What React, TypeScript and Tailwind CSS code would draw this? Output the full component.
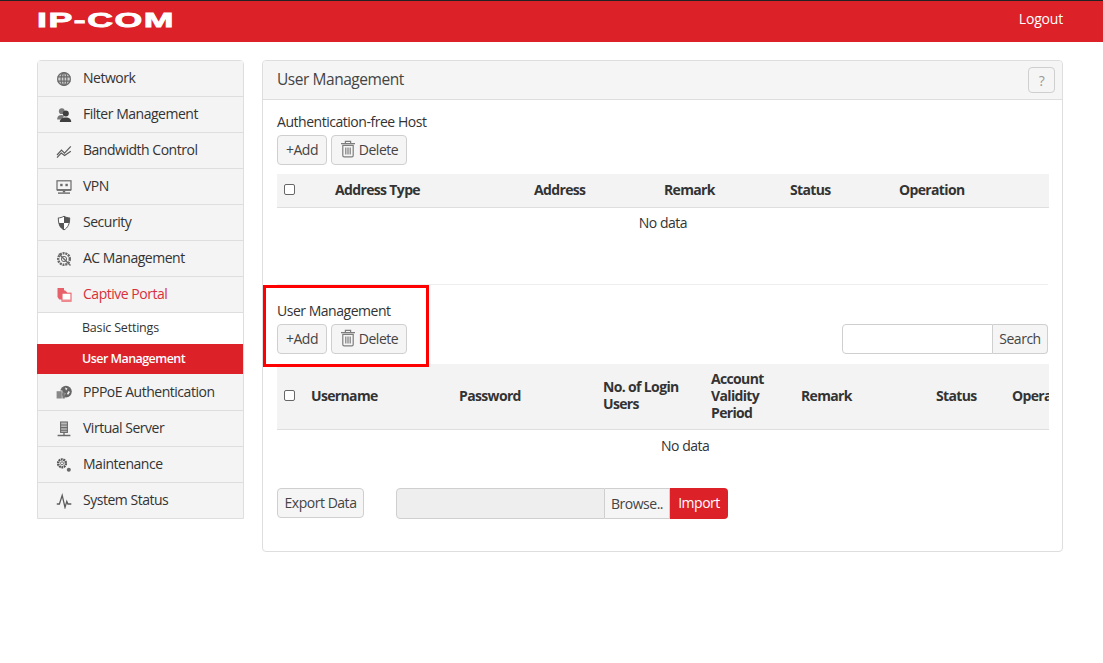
import React from "react";

const G = "#6a6a6a";

const icons: Record<string, React.ReactNode> = {
  globe: (
    <g fill="none" stroke={G} strokeWidth="1.2">
      <circle cx="8" cy="8" r="6.4" fill="#8a8a8a" fillOpacity=".35" />
      <ellipse cx="8" cy="8" rx="2.9" ry="6.4" />
      <path d="M1.6 5.8h12.8M1.6 10.2h12.8M8 1.6v12.8" />
    </g>
  ),
  users: (
    <g>
      <circle cx="5.8" cy="4.2" r="2.9" fill="#777" />
      <path d="M1.2 12c0-2.6 1.6-4 4.4-4 1 0 1.8.2 2.4.6L6.6 12.4H1.2z" fill="#777" />
      <circle cx="9.8" cy="6.6" r="3" fill="#3f3f3f" />
      <path d="M3.8 15c0-2.8 2.2-4.6 6-4.6s5.4 1.8 5.4 4.6z" fill="#3f3f3f" />
    </g>
  ),
  chart: (
    <g fill="none" stroke="#5c5c5c" strokeWidth="1.2">
      <path d="M1 12 5.5 7.2l3 3L14.8 3.4" />
      <path d="M1 14.6 5.2 10l3.4 2.6 6.2-4.4" />
    </g>
  ),
  vpn: (
    <g>
      <rect x="1" y="1.8" width="14" height="9" fill="none" stroke={G} strokeWidth="1.2" />
      <rect x="4.2" y="4.8" width="2.4" height="2.4" fill={G} />
      <rect x="9.4" y="4.8" width="2.4" height="2.4" fill={G} />
      <rect x="1" y="10.4" width="14" height="1.4" fill={G} />
      <rect x="6.8" y="11.8" width="2.4" height="1.6" fill={G} />
      <rect x="2" y="13.4" width="12" height="1.4" fill={G} />
    </g>
  ),
  shield: (
    <g>
      <path d="M8 1.2c2 1.2 3.8 1.7 5.7 1.7 0 6-1.7 9.8-5.700 12C4 12.700 2.300 8.900 2.300 2.900 4.200 2.900 6 2.400 8 1.200z" fill="#fff" stroke="#555" strokeWidth="1" />
      <path d="M8 1.200c2 1.200 3.800 1.700 5.700 1.700 0 2-.2 3.700-.5 5.100H8zM8 8v6.900C4 12.700 2.900 10.500 2.900 8z" fill="#555" />
    </g>
  ),
  gear: (
    <g fill="none" stroke={G}>
      <circle cx="8" cy="8" r="5.800" strokeWidth="2.400" strokeDasharray="2 .8" />
      <circle cx="8" cy="8" r="2.600" strokeWidth="1" />
      <path d="M2.800 2.800 14.500 14.500" strokeWidth="1.400" />
    </g>
  ),
  portal: (
    <g>
      <path d="M1.500 1h6.500v2.300l3 1.700v1H6.500v6.500H3.200L1.500 10z" fill="#e8616a" />
      <path d="M9 3.500v2" stroke="#e8616a" strokeWidth="1" />
      <rect x="6" y="6.200" width="9" height="8" fill="#fff" stroke="#e8616a" strokeWidth="1.100" />
      <rect x="6" y="12.500" width="9" height="2" fill="#ee8a90" />
    </g>
  ),
  pppoe: (
    <g>
      <circle cx="10" cy="7.600" r="5.800" fill="#666" />
      <path d="M9 3.500l2.500 1-1.500 2zM12.500 7l1.500 1-2 3-1-1.500zM7.500 8.500l2 1-1 2.500z" fill="#f4f4f4" />
      <rect x=".2" y="6.500" width="6.200" height="8" fill="#f4f4f4" />
      <rect x=".6" y="7.200" width="5.200" height="7.300" fill="#888" />
      <rect x="6.400" y="9" width="2.400" height="5.500" fill="#777" />
    </g>
  ),
  server: (
    <g fill="none" stroke={G} strokeWidth="1.100">
      <rect x="4.600" y="1" width="6.800" height="10.400" fill="#bbb" />
      <path d="M4.600 4h6.800M4.600 6.600h6.800M4.600 9.200h6.800" />
      <path d="M8 11.400v2.800M1.600 14.500h12.800" strokeWidth="1.300" />
    </g>
  ),
  cogs: (
    <g fill="none" stroke="#555">
      <circle cx="6" cy="6.300" r="3.900" strokeWidth="2.400" strokeDasharray="1.800 .6" />
      <circle cx="6" cy="6.300" r="1.500" strokeWidth=".8" />
      <circle cx="12.800" cy="12.800" r="2" fill="#666" stroke="none" />
    </g>
  ),
  pulse: (
    <path d="M.8 11h2.600L6.200 2.400 9 14.400l1.800-6 1.100 2.600h3.400" fill="none" stroke="#5c5c5c" strokeWidth="1.300" />
  ),
};

const SideIcon = ({ name }: { name: string }) => (
  <svg viewBox="0 0 16 16" className="h-[16px] w-[16px] shrink-0">
    {icons[name]}
  </svg>
);

const Item = ({
  icon,
  label,
  active,
  height,
  last,
}: {
  icon: string;
  label: string;
  active?: boolean;
  height: string;
  last?: boolean;
}) => (
  <div
    className={`flex items-center bg-[#f4f4f4] pl-[18px] text-[14px] ${height} ${
      active ? "text-[#d9303a]" : "text-[#333]"
    } ${last ? "" : "border-b border-[#dedede]"}`}
  >
    <SideIcon name={icon} />
    <span className="ml-[11px] -translate-y-[1px]">{label}</span>
  </div>
);

const Trash = () => (
  <svg viewBox="0 0 16 18" className="h-[18px] w-[16px]" fill="none" stroke="#7d7d7d" strokeWidth="1.200">
    <path d="M1 3.600h14M5.400 3.400V1.400h5.200v2" />
    <path d="M2.800 5.400v10c0 .9.500 1.400 1.300 1.400h7.800c.8 0 1.300-.5 1.300-1.400v-10z" />
    <path d="M5.800 7.400v7.200M8 7.400v7.200M10.200 7.400v7.200" />
  </svg>
);

const Btn = ({ children, className = "" }: { children: React.ReactNode; className?: string }) => (
  <button
    className={`flex h-[30px] items-center justify-center rounded-[4px] border border-[#cfcfcf] bg-[#f5f5f5] pb-[2px] text-[14px] text-[#444] ${className}`}
  >
    {children}
  </button>
);

const Actions = () => (
  <div className="flex gap-[4px]">
    <Btn className="w-[50px]">+Add</Btn>
    <Btn className="w-[76px] gap-[3px]">
      <Trash />
      <span>Delete</span>
    </Btn>
  </div>
);

const Check = () => (
  <input type="checkbox" className="m-0 block h-[11px] w-[11px] appearance-none rounded-[2px] border border-[#666] bg-white" />
);

const Th = ({ children }: { children?: React.ReactNode }) => (
  <th className="px-[7px] pb-[2px] pt-0 text-left align-middle font-bold tracking-[-0.65px] text-[#333]">{children}</th>
);

const side = [
  ["globe", "Network"],
  ["users", "Filter Management"],
  ["chart", "Bandwidth Control"],
  ["vpn", "VPN"],
  ["shield", "Security"],
  ["gear", "AC Management"],
];

export default function App() {
  return (
    <div className="h-[663px] w-[1103px] overflow-hidden bg-white text-[14px] leading-[17px] text-[#333] [font-family:'Open_Sans','Noto_Sans',sans-serif] tracking-[-0.48px]">
      <header className="flex h-[42px] items-center justify-between border-t border-[#222] bg-[#dc2128] pl-[37px] pr-[40px]">
        <svg width="138" height="26" viewBox="0 0 138 26" className="-translate-y-[2px]">
          <text
            transform="scale(1.7 1)"
            x="0"
            y="20.400"
            fontFamily="'Liberation Sans', Arial, sans-serif"
            fontWeight="700"
            fontSize="21"
            letterSpacing="0.9"
            fill="#fff"
            stroke="#fff"
            strokeWidth=".8"
          >
            IP-COM
          </text>
        </svg>
        <span className="-translate-y-[3px] tracking-[-0.2px] text-white">Logout</span>
      </header>

      <div className="flex items-start gap-[18px] pl-[37px] pt-[18px]">
        <nav className="w-[207px] rounded-t-[4px] border border-[#dedede]">
          {side.map(([i, l]) => (
            <Item key={l} icon={i} label={l} height="h-[36px]" />
          ))}
          <Item icon="portal" label="Captive Portal" active height="h-[36px]" />
          <div className="flex h-[31px] items-center bg-white pb-[2px] pl-[44px] text-[12.500px] tracking-[-0.2px] text-[#333]">Basic Settings</div>
          <div className="-ml-[1px] flex h-[30px] items-center bg-[#dc2128] pb-[1px] pl-[45px] text-[12.500px] font-semibold tracking-[-0.55px] text-white">User Management</div>
          <Item icon="pppoe" label="PPPoE Authentication" height="h-[37px]" />
          <Item icon="server" label="Virtual Server" height="h-[36px]" />
          <Item icon="cogs" label="Maintenance" height="h-[36px]" />
          <Item icon="pulse" label="System Status" height="h-[35px]" last />
        </nav>

        <main className="h-[492px] w-[801px] rounded-[4px] border border-[#dedede]">
          <div className="flex h-[39px] items-center justify-between rounded-t-[4px] border-b border-[#dedede] bg-[#f5f5f5] pl-[14px] pr-[7px]">
            <span className="-translate-y-[1px] text-[15.500px] tracking-[-0.45px] text-[#444]">User Management</span>
            <span className="flex h-[26px] w-[27px] items-center justify-center rounded-[4px] border border-[#cfcfcf] text-[#999]">?</span>
          </div>

          <div className="px-[14px]">
            <div className="pt-[13px] leading-[18px] tracking-[-0.47px]">Authentication-free Host</div>
            <div className="mt-[4px]"><Actions /></div>
            <table className="mt-[9px] w-[772px] table-fixed border-collapse">
              <colgroup>
                <col className="w-[51px]" /><col className="w-[199px]" /><col className="w-[130px]" />
                <col className="w-[126px]" /><col className="w-[109px]" /><col className="w-[157px]" />
              </colgroup>
              <thead>
                <tr className="h-[33px] border-b border-[#dedede] bg-[#f3f3f3]">
                  <Th><Check /></Th>
                  <Th>Address Type</Th>
                  <Th>Address</Th>
                  <Th>Remark</Th>
                  <Th>Status</Th>
                  <Th>Operation</Th>
                </tr>
              </thead>
              <tbody>
                <tr className="h-[31px]"><td colSpan={6} className="text-center">No data</td></tr>
              </tbody>
            </table>

            <div className="mt-[46px] border-t border-[#eeeeee]" />

            <div className="relative">
              <div className="absolute -left-[14px] top-0 h-[82px] w-[166px] border-[3px] border-[#f00]" />
              <div className="pt-[17px] leading-[18px]">User Management</div>
              <div className="mt-[4px] flex items-end justify-between">
                <Actions />
                <div className="flex h-[30px]">
                  <div className="w-[151px] rounded-l-[4px] border border-[#cfcfcf] bg-white" />
                  <div className="flex w-[55px] items-center justify-center rounded-r-[4px] border border-l-0 border-[#cfcfcf] bg-[#f5f5f5] pb-[2px] text-[#444]">Search</div>
                </div>
              </div>
            </div>

            <div className="mt-[10px] w-[772px] overflow-hidden">
              <table className="w-[823px] table-fixed border-collapse">
                <colgroup>
                  <col className="w-[27px]" /><col className="w-[148px]" /><col className="w-[144px]" /><col className="w-[108px]" />
                  <col className="w-[90px]" /><col className="w-[135px]" /><col className="w-[76px]" /><col className="w-[95px]" />
                </colgroup>
                <thead>
                  <tr className="h-[65px] border-b border-[#dedede] bg-[#f3f3f3]">
                    <Th><Check /></Th>
                    <Th>Username</Th>
                    <Th>Password</Th>
                    <Th>No. of Login Users</Th>
                    <Th>Account Validity Period</Th>
                    <Th>Remark</Th>
                    <Th>Status</Th>
                    <Th>Operation</Th>
                  </tr>
                </thead>
              </table>
              <div className="flex h-[30px] items-center pl-[384px] pt-[2px]">No data</div>
            </div>

            <div className="mt-[28px] flex items-center">
              <Btn className="w-[87px]">Export Data</Btn>
              <div className="ml-[32px] flex h-[31px]">
                <div className="w-[209px] rounded-l-[4px] border border-[#cfcfcf] bg-[#eeeeee]" />
                <div className="flex w-[65px] items-center justify-center border-y border-r border-[#cfcfcf] bg-[#f5f5f5] text-[#444]">Browse..</div>
                <div className="flex w-[58px] items-center justify-center rounded-r-[4px] bg-[#dc2128] pb-[2px] text-white">Import</div>
              </div>
            </div>
          </div>
        </main>
      </div>
    </div>
  );
}
